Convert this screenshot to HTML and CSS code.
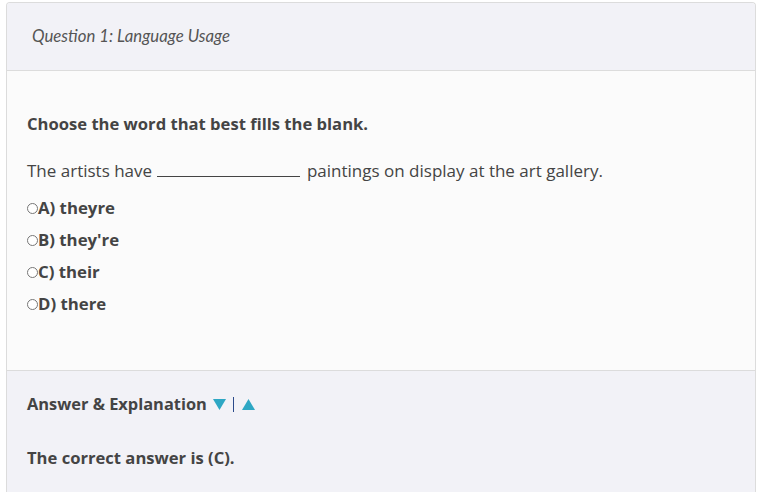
FILE: index.html
```html
<!DOCTYPE html>
<html>
<head>
<meta charset="utf-8">
<link rel="stylesheet" href="styles.css">
</head>
<body>
<div class="card">
  <div class="card-header">Question 1: Language Usage</div>
  <div class="card-body">
    <p class="prompt">Choose the word that best fills the blank.</p>
    <p class="sentence">The artists have <span class="blank"></span> paintings on display at the art gallery.</p>
    <ul class="options">
      <li><span class="radio"></span>A) theyre</li>
      <li><span class="radio"></span>B) they're</li>
      <li><span class="radio"></span>C) their</li>
      <li><span class="radio"></span>D) there</li>
    </ul>
  </div>
  <div class="card-footer">
    <p class="answer-toggle">Answer &amp; Explanation
      <svg class="tri" width="13" height="11" viewBox="0 0 13 11"><polygon points="0,0 13,0 6.5,11" fill="#2ea7c4"/></svg>
      <span class="sep"></span>
      <svg class="tri" width="13" height="11" viewBox="0 0 13 11"><polygon points="0,11 13,11 6.5,0" fill="#2ea7c4"/></svg>
    </p>
    <p class="answer">The correct answer is (C).</p>
  </div>
</div>
</body>
</html>
```
FILE: styles.css
```css
html, body {
  margin: 0;
  background: #ffffff;
}
body {
  padding: 2px 2px 0 6px;
  font-family: "Open Sans", "Liberation Sans", sans-serif;
  color: #444444;
}
.card {
  border: 1px solid #dcdcdc;
  border-bottom: none;
  border-radius: 4px 4px 0 0;
  background: #fbfbfb;
  overflow: hidden;
}
.card-header {
  height: 64px;
  display: flex;
  align-items: center;
  padding: 0 25px 3px;
  background: #f2f2f7;
  border-bottom: 1px solid #dcdcdc;
  font-family: "Lato", "Open Sans", sans-serif;
  font-style: italic;
  font-size: 16.8px;
  color: #555555;
}
.card-body {
  padding: 42px 20px 50px;
  background: #fbfbfb;
}
p {
  margin: 0;
}
.prompt {
  font-weight: 700;
  font-size: 16.6px;
  line-height: 22px;
}
.sentence {
  margin-top: 25px;
  font-size: 17px;
  line-height: 22px;
}
.blank {
  display: inline-block;
  width: 143px;
  margin: 0 3px 0 0;
  border-bottom: 1px solid #444444;
  vertical-align: baseline;
}
.options {
  list-style: none;
  margin: 10px 0 0;
  padding: 0;
}
.options li {
  font-weight: 700;
  font-size: 16.8px;
  line-height: 32px;
  display: flex;
  align-items: center;
}
.radio {
  width: 9px;
  height: 9px;
  border: 1px solid #767676;
  border-radius: 50%;
  background: #fff;
  flex: none;
}
.card-footer {
  background: #f2f2f7;
  border-top: 1px solid #dcdcdc;
  padding: 22px 20px 40px;
}
.answer-toggle {
  font-weight: 700;
  font-size: 16.4px;
  line-height: 22px;
  display: flex;
  align-items: center;
}
.tri {
  display: block;
  margin-left: 6px;
}
.sep {
  display: block;
  width: 1px;
  height: 15px;
  background: #2b4a8a;
  margin: 0 2px 0 7px;
}
.answer {
  margin-top: 32px;
  font-weight: 700;
  font-size: 16.6px;
  line-height: 22px;
}
```
